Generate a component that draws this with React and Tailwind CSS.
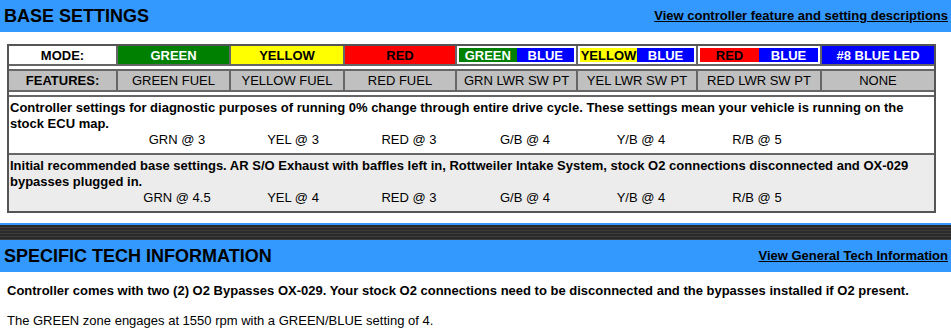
import React from "react";

const cols = "grid grid-cols-[109px_113px_114px_112px_121px_120px_124px_112px]";

const features = [
  "GREEN FUEL",
  "YELLOW FUEL",
  "RED FUEL",
  "GRN LWR SW PT",
  "YEL LWR SW PT",
  "RED LWR SW PT",
  "NONE",
];

const presets = [
  {
    text: "Controller settings for diagnostic purposes of running 0% change through entire drive cycle. These settings mean your vehicle is running on the stock ECU map.",
    values: ["GRN @ 3", "YEL @ 3", "RED @ 3", "G/B @ 4", "Y/B @ 4", "R/B @ 5"],
    bg: "bg-white",
  },
  {
    text: "Initial recommended base settings. AR S/O Exhaust with baffles left in, Rottweiler Intake System, stock O2 connections disconnected and OX-029 bypasses plugged in.",
    values: ["GRN @ 4.5", "YEL @ 4", "RED @ 3", "G/B @ 4", "Y/B @ 4", "R/B @ 5"],
    bg: "bg-[#ececec]",
  },
];

function SectionBar({ title, link }) {
  return (
    <div className="flex items-center justify-between h-8 bg-[#3399ff] pl-[4px] pr-[3px]">
      <h2 className="text-[18px] font-bold text-black leading-none">{title}</h2>
      <a href="#" className="text-[13px] font-bold text-black underline">
        {link}
      </a>
    </div>
  );
}

// split cell: white frame with two coloured halves
function Combo({ left, label, labelColor }) {
  return (
    <div className="bg-white border-r-2 border-[#666] p-[2px] flex">
      <div className={`flex-1 flex items-center justify-center ${left} ${labelColor}`}>{label}</div>
      <div className="flex-1 flex items-center justify-center bg-[#0000ff] text-white">BLUE</div>
    </div>
  );
}

function Spacer() {
  return <div className="h-[5px] bg-white border-b-2 border-[#666]" />;
}

export default function App() {
  return (
    <div className="w-[951px] h-[335px] bg-white font-['Liberation_Sans',Arial,sans-serif] text-black overflow-hidden">
      <SectionBar title="BASE SETTINGS" link="View controller feature and setting descriptions" />

      <div className="mt-3 ml-[7px] w-[929px] border-2 border-[#555] text-[13px]">
        {/* mode row */}
        <div className={`${cols} h-[20px] font-bold border-b-2 border-[#666] leading-none`}>
          <div className="bg-white border-r-2 border-[#666] flex items-center justify-center">MODE:</div>
          <div className="bg-[#008000] text-white border-r-2 border-[#666] flex items-center justify-center">GREEN</div>
          <div className="bg-[#ffff00] border-r-2 border-[#666] flex items-center justify-center">YELLOW</div>
          <div className="bg-[#ff0000] border-r-2 border-[#666] flex items-center justify-center">RED</div>
          <Combo left="bg-[#008000]" label="GREEN" labelColor="text-white" />
          <Combo left="bg-[#ffff00]" label="YELLOW" labelColor="text-black" />
          <Combo left="bg-[#ff0000]" label="RED" labelColor="text-black" />
          <div className="bg-[#0000ff] text-white flex items-center justify-center">#8 BLUE LED</div>
        </div>
        <Spacer />

        {/* features row */}
        <div className={`${cols} h-[21px] bg-[#c0c0c0] border-b-2 border-[#666] leading-none`}>
          <div className="font-bold border-r-2 border-[#666] flex items-center justify-center">FEATURES:</div>
          {features.map((f, i) => (
            <div
              key={f}
              className={`flex items-center justify-center ${i < features.length - 1 ? "border-r-2 border-[#666]" : ""}`}
            >
              {f}
            </div>
          ))}
        </div>
        <Spacer />

        {presets.map((p, i) => (
          <div
            key={i}
            className={`${p.bg} pl-[1px] pr-6 pt-[3px] pb-[5px] leading-4 ${i === 0 ? "border-b-2 border-[#666]" : ""}`}
          >
            <p className="font-bold">{p.text}</p>
            <div className="grid grid-cols-[116px_116px_116px_116px_116px_116px] pl-[109px]">
              {p.values.map((v, j) => (
                <span key={j} className="text-center">
                  {v}
                </span>
              ))}
            </div>
          </div>
        ))}
      </div>

      <div className="mt-[10px] border-t-2 border-[#3399ff] h-[17px] bg-[repeating-linear-gradient(to_bottom,#2a2a2a_0px,#2a2a2a_2px,#3e3e3e_2px,#3e3e3e_3px)]" />
      <SectionBar title="SPECIFIC TECH INFORMATION" link="View General Tech Information" />

      <div className="px-[7px] pt-[11px] text-[13px] leading-4">
        <p className="font-bold">
          Controller comes with two (2) O2 Bypasses OX-029. Your stock O2 connections need to be disconnected and the bypasses installed if O2 present.
        </p>
        <p className="mt-[14px]">The GREEN zone engages at 1550 rpm with a GREEN/BLUE setting of 4.</p>
      </div>
    </div>
  );
}
